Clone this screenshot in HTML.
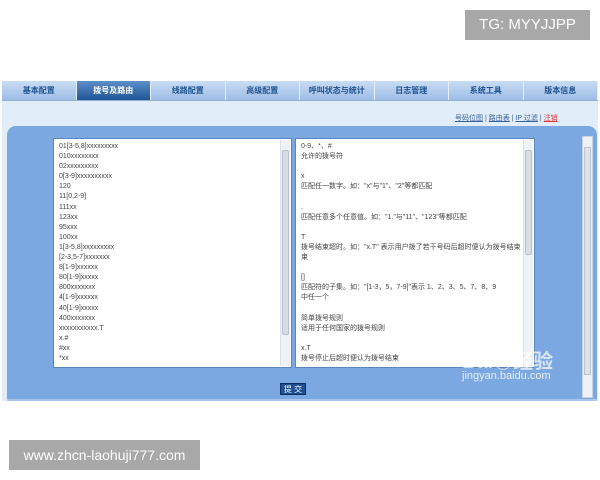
<!DOCTYPE html>
<html><head><meta charset="utf-8"><style>
*{margin:0;padding:0;box-sizing:border-box}
body{width:600px;height:480px;background:#fff;position:relative;overflow:hidden;font-family:"Liberation Sans","Noto Sans CJK SC",sans-serif}
.tg{position:absolute;left:465px;top:10px;width:125px;height:30px;background:#a8a8a8;color:#fff;font-size:15px;line-height:30px;text-align:center}
.www{position:absolute;left:9px;top:440px;width:191px;height:30px;background:#a8a8a8;color:#fff;font-size:14px;line-height:30px;text-align:center}
.nav{position:absolute;left:2px;top:81px;width:596px;height:20px;background:linear-gradient(#c9dcf3,#9dbde6);display:flex;border-bottom:1px solid #8fb0dc}
.nav div{flex:1;font-size:8px;color:#1d4f8f;text-align:center;line-height:20px;border-right:1px solid #e6eef9;font-weight:bold}
.nav div.a{background:linear-gradient(#5d8fc8,#1f5596);color:#fff}
.light{position:absolute;left:2px;top:101px;width:596px;height:300px;background:#e2edfa}
.links{position:absolute;left:455px;top:113px;font-size:7px;color:#355f99;white-space:nowrap}
.links span{text-decoration:underline}
.links .r{color:#d33}
.panel{position:absolute;left:7px;top:126px;width:590px;height:275px;background:#7ca8e1;border-radius:9px 9px 0 0;border-bottom:2px solid #a9c6ec}
.ta{position:absolute;background:#fff;border:1px solid #5a86be;font-size:7px;color:#444;line-height:10.1px;padding:3px 5px;overflow:hidden;white-space:nowrap}
.sb{position:absolute;right:1px;top:1px;bottom:1px;width:10px;background:#eef1f5;border-left:1px solid #dde}
.sb i{position:absolute;left:1px;right:1px;background:#d8dde4;border:1px solid #b8c0cc;border-radius:2px}
.btn{position:absolute;left:280px;top:383px;width:26px;height:12px;background:#1e4f8f;color:#fff;font-size:8px;text-align:center;line-height:12px;border:1px solid #0c2f63}
.wm{position:absolute;left:462px;top:345px;color:rgba(255,255,255,.7);font-size:20px;font-weight:bold}
.wm2{position:absolute;left:462px;top:370px;color:rgba(255,255,255,.8);font-size:11px}
</style></head><body>
<div class="tg">TG: MYYJJPP</div>
<div class="nav"><div>基本配置</div><div class="a">拨号及路由</div><div>线路配置</div><div>高级配置</div><div>呼叫状态与统计</div><div>日志管理</div><div>系统工具</div><div>版本信息</div></div>
<div class="light"></div>
<div class="links"><span>号码位图</span> | <span>路由表</span> | <span>IP 过滤</span> | <span class="r">注销</span></div>
<div class="panel"></div>
<div class="ta" style="left:53px;top:138px;width:239px;height:230px">01[3-5,8]xxxxxxxxx<br>010xxxxxxxx<br>02xxxxxxxxx<br>0[3-9]xxxxxxxxxx<br>120<br>11[0,2-9]<br>111xx<br>123xx<br>95xxx<br>100xx<br>1[3-5,8]xxxxxxxxx<br>[2-3,5-7]xxxxxxx<br>8[1-9]xxxxxx<br>80[1-9]xxxxx<br>800xxxxxxx<br>4[1-9]xxxxxx<br>40[1-9]xxxxx<br>400xxxxxxx<br>xxxxxxxxxxx.T<br>x.#<br>#xx<br>*xx<div class="sb"><i style="top:10px;height:185px"></i></div></div>
<div class="ta" style="left:295px;top:138px;width:240px;height:230px">0-9、*、#<br>允许的拨号符<br><br>x<br>匹配任一数字。如："x"与"1"、"2"等都匹配<br><br>.<br>匹配任意多个任意值。如："1."与"11"、"123"等都匹配<br><br>T<br>拨号结束超时。如："x.T" 表示用户拨了若干号码后超时便认为拨号结束<br>束<br><br>[]<br>匹配符的子集。如："[1-3，5，7-9]"表示 1、2、3、5、7、8、9<br>中任一个<br><br>简单拨号规则<br>适用于任何国家的拨号规则<br><br>x.T<br>拨号停止后超时便认为拨号结束<div class="sb"><i style="top:10px;height:105px"></i></div></div>
<div style="position:absolute;left:582px;top:136px;width:11px;height:262px;background:#eef1f5;border:1px solid #c7d3e3"><i style="position:absolute;left:1px;right:1px;top:10px;height:228px;background:#dfe3e8;border:1px solid #bcc4cf"></i></div>
<div class="btn">提 交</div>
<div class="wm">Bai◉经验</div>
<div class="wm2">jingyan.baidu.com</div>
<div class="www">www.zhcn-laohuji777.com</div>
</body></html>
